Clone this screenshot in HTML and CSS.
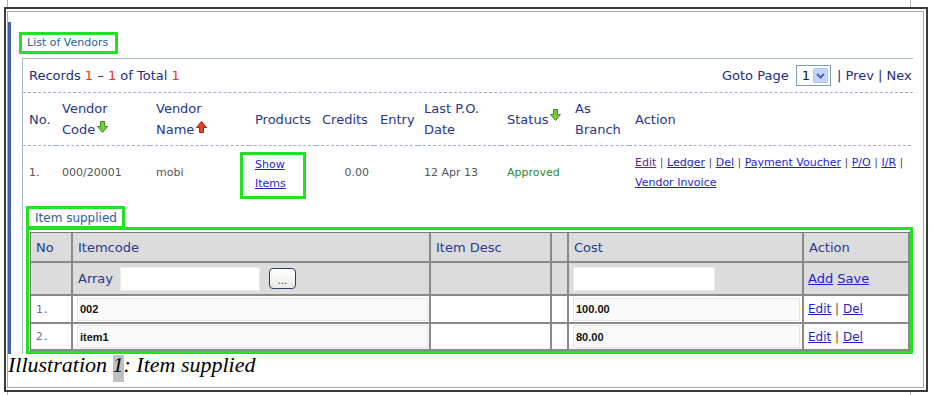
FILE: index.html
```html
<!DOCTYPE html>
<html lang="en">
<head>
    <meta charset="UTF-8">
    <meta name="viewport" content="width=device-width, initial-scale=1.0">
    <title>Illustration 1: Item supplied</title>
    <link rel="stylesheet" href="styles.css">
</head>
<body>
    <div class="sheet">
        <span class="mark mark-tl"></span>
        <span class="mark mark-tr"></span>
        <span class="mark mark-bl"></span>
        <span class="mark mark-br"></span>

        <div class="frame">
            <div class="inner">
                <div class="shot">
                    <div class="tag tag-vendors">List of Vendors</div>

                    <div class="panel">
                        <div class="records">
                            <div class="count">Records <b>1</b> &ndash; <b>1</b> of Total <b>1</b></div>
                            <div class="pager">Goto Page <span class="select"><span class="select-value">1</span><span class="select-btn"><svg width="13" height="13" viewBox="0 0 13 13"><path d="M3 5l3.5 3.5L10 5" fill="none" stroke="#4a64a0" stroke-width="2"/></svg></span></span> | Prev | Nex</div>
                        </div>

                        <table class="vendors">
                            <tr>
                                <th class="v-no">No.</th>
                                <th class="v-code">Vendor<br>Code<svg class="sort" width="11" height="12" viewBox="0 0 11 12"><path d="M3.5 .5h4v5h3l-5 6-5-6h3z" fill="#74cc3e" stroke="#3e901f"/></svg></th>
                                <th class="v-name">Vendor<br>Name<svg class="sort" width="11" height="12" viewBox="0 0 11 12"><path d="M5.5 .5l5 6h-3v5h-4v-5h-3z" fill="#e6402c" stroke="#a0261a"/></svg></th>
                                <th class="v-prod">Products</th>
                                <th class="v-cred">Credits</th>
                                <th class="v-entry">Entry</th>
                                <th class="v-date">Last P.O.<br>Date</th>
                                <th class="v-status">Status<svg class="sort sort-up" width="11" height="12" viewBox="0 0 11 12"><path d="M3.5 .5h4v5h3l-5 6-5-6h3z" fill="#74cc3e" stroke="#3e901f"/></svg></th>
                                <th class="v-branch">As<br>Branch</th>
                                <th class="v-action">Action</th>
                            </tr>
                            <tr>
                                <td>1.</td>
                                <td>000/20001</td>
                                <td>mobi</td>
                                <td class="products"><div class="show-box"><a href="#">Show</a><br><a href="#">Items</a></div></td>
                                <td class="num">0.00</td>
                                <td></td>
                                <td>12 Apr 13</td>
                                <td class="approved">Approved</td>
                                <td></td>
                                <td class="links"><a href="#" class="visited">Edit</a> | <a href="#">Ledger</a> | <a href="#">Del</a> | <a href="#">Payment Voucher</a> | <a href="#">P/O</a> | <a href="#">I/R</a> |<br><a href="#">Vendor Invoice</a></td>
                            </tr>
                        </table>

                        <div class="tag tag-items">Item supplied</div>

                        <div class="items-box">
                            <table class="items">
                                <tr class="items-head">
                                    <th class="c-no">No</th>
                                    <th class="c-code">Itemcode</th>
                                    <th class="c-desc">Item Desc</th>
                                    <th class="c-gap"></th>
                                    <th class="c-cost">Cost</th>
                                    <th class="c-act">Action</th>
                                </tr>
                                <tr class="items-filter">
                                    <td></td>
                                    <td>
                                        <div class="array">
                                            <span>Array</span>
                                            <input class="box box-array" type="text">
                                            <button class="pick" type="button">...</button>
                                        </div>
                                    </td>
                                    <td></td>
                                    <td></td>
                                    <td><input class="box box-cost" type="text"></td>
                                    <td class="act"><a href="#">Add</a> <a href="#">Save</a></td>
                                </tr>
                                <tr class="items-row row-1">
                                    <td class="idx">1.</td>
                                    <td><input class="field-box field-code" type="text" value="002" readonly></td>
                                    <td></td>
                                    <td></td>
                                    <td><input class="field-box field-cost" type="text" value="100.00" readonly></td>
                                    <td class="act small"><a href="#">Edit</a> | <a href="#">Del</a></td>
                                </tr>
                                <tr class="items-row row-2">
                                    <td class="idx">2.</td>
                                    <td><input class="field-box field-code" type="text" value="item1" readonly></td>
                                    <td></td>
                                    <td></td>
                                    <td><input class="field-box field-cost" type="text" value="80.00" readonly></td>
                                    <td class="act small"><a href="#">Edit</a> | <a href="#">Del</a></td>
                                </tr>
                            </table>
                        </div>
                    </div>
                </div>

                <p class="caption">Illustration <span class="field">1</span>: Item supplied</p>
            </div>
        </div>
    </div>
</body>
</html>
```

FILE: styles.css
```css
* {
    margin: 0;
    padding: 0;
    box-sizing: border-box;
}

body {
    background: #fff;
    font-family: "DejaVu Sans", Verdana, sans-serif;
}

a {
    color: #1f1fcf;
}

/* Page with crop marks */
.sheet {
    position: relative;
    width: 933px;
    height: 395px;
    padding: 7px 0 0 4px;
    overflow: hidden;
}

.mark {
    position: absolute;
    width: 1px;
    background: #b4b4b4;
}

.mark-tl { left: 7px; top: 0; height: 7px; }
.mark-tr { left: 910px; top: 0; height: 7px; }
.mark-bl { left: 7px; top: 392px; height: 3px; }
.mark-br { left: 910px; top: 392px; height: 3px; }

.frame {
    width: 924px;
    height: 385px;
    border: 2px solid #3a3a3a;
    padding: 2px 2px 2px 1px;
}

.inner {
    height: 100%;
    border: 1px solid #a8a8a8;
    padding-top: 10px;
}

/* Embedded screenshot */
.shot {
    width: 905px;
    height: 332px;
    border-left: 3px solid #4262a2;
    padding-top: 10px;
    display: flex;
    flex-direction: column;
    overflow: hidden;
}

.tag {
    align-self: flex-start;
    border: 3px solid #22e222;
    color: #2d5d96;
    white-space: nowrap;
}

.tag-vendors {
    margin-left: 8px;
    width: 99px;
    height: 22px;
    padding-left: 5px;
    font-size: 11px;
    line-height: 16px;
}

.panel {
    margin-left: 11px;
    margin-top: 4px;
    width: 891px;
    flex: 1;
    border-top: 1px solid #a6bad0;
    border-left: 1px solid #a6bad0;
}

.records {
    width: 890px;
    height: 34px;
    padding-left: 6px;
    display: flex;
    align-items: center;
    border-bottom: 1px dashed #9fb2c8;
    font-size: 13px;
    color: #1f2d7d;
    white-space: nowrap;
}

.count {
    flex: none;
    width: 693px;
}

.count b {
    font-weight: normal;
    color: #e4341e;
}

.pager {
    flex: none;
    display: flex;
    align-items: center;
    white-space: pre;
}

.select {
    display: inline-flex;
    align-items: center;
    width: 35px;
    height: 21px;
    margin: 0 2px 0 3px;
    border: 1px solid #7f9db9;
    background: #fff;
    color: #111;
}

.select-value {
    padding-left: 5px;
}

.select-btn {
    display: flex;
    align-items: center;
    justify-content: center;
    width: 15px;
    height: 15px;
    margin-left: auto;
    margin-right: 2px;
    background: #c3d5fc;
    border: 1px solid #b0c4ec;
    border-radius: 2px;
}

/* Vendor list */
.vendors {
    width: 888px;
    border-collapse: separate;
    border-spacing: 0;
    table-layout: fixed;
}

.vendors th {
    height: 53px;
    padding-left: 6px;
    border-bottom: 1px dashed #9fb2c8;
    font-size: 13px;
    line-height: 21px;
    font-weight: normal;
    color: #27378a;
    text-align: left;
    vertical-align: middle;
    white-space: nowrap;
}

.v-no { width: 33px; }
.v-code { width: 94px; }
.v-name { width: 99px; }
.v-prod { width: 67px; }
.v-cred { width: 58px; }
.v-entry { width: 44px; }
.v-date { width: 83px; }
.v-status { width: 68px; }
.v-branch { width: 60px; }
.v-action { width: 282px; }

.sort {
    margin-left: 2px;
    vertical-align: 1px;
}

.sort-up {
    vertical-align: 3px;
}

.vendors td {
    height: 54px;
    padding-left: 6px;
    font-size: 11px;
    line-height: 20px;
    color: #555;
    vertical-align: middle;
    white-space: nowrap;
}

.vendors td.num {
    text-align: right;
    padding-right: 5px;
}

.vendors td.approved {
    color: #2f8a2f;
}

.vendors td.products {
    vertical-align: bottom;
    padding-bottom: 1px;
}

.show-box {
    width: 66px;
    margin-left: -15px;
    padding: 0 0 3px 12px;
    border: 3px solid #22e222;
    line-height: 19px;
}

.links {
    color: #555;
}

.links a.visited {
    color: #5b2a80;
}

/* Item supplied */
.tag-items {
    margin-left: 3px;
    margin-top: 6px;
    width: 99px;
    height: 23px;
    padding-left: 6px;
    font-size: 12px;
    line-height: 18px;
}

.items-box {
    width: 887px;
    margin-top: -2px;
    margin-left: 3px;
    border: 3px solid #22e222;
    padding: 2px 0 0 1px;
}

.items {
    width: 880px;
    border-collapse: separate;
    border-spacing: 0;
    table-layout: fixed;
    border-top: 1px solid #7a7a7a;
    border-left: 1px solid #7a7a7a;
}

.items th,
.items td {
    border-right: 2px solid #8a8a8a;
    border-bottom: 2px solid #8a8a8a;
    padding-left: 5px;
    vertical-align: middle;
    text-align: left;
    white-space: nowrap;
}

.items th {
    height: 30px;
    background: #dcdcdc;
    font-size: 13px;
    font-weight: normal;
    color: #2a3a8e;
}

.c-no { width: 42px; }
.c-code { width: 358px; }
.c-desc { width: 121px; padding-left: 3px; }
.c-gap { width: 17px; }
.c-cost { width: 235px; }
.c-act { width: 106px; }

.items-filter td {
    height: 33px;
    background: #dcdcdc;
    font-size: 13px;
    color: #2a3a8e;
}

.array {
    display: flex;
    align-items: center;
}

.box {
    display: block;
    height: 24px;
    border: 1px solid #ececec;
    background: #fff;
    font: 12px "DejaVu Sans", sans-serif;
}

.box-array {
    width: 140px;
    margin-left: 7px;
}

.pick {
    width: 27px;
    height: 21px;
    margin-left: 9px;
    border: 1px solid #2a3f66;
    border-radius: 4px;
    background: linear-gradient(#ffffff, #ebeae4);
    font: 10px "DejaVu Sans", sans-serif;
    color: #444;
    padding-top: 3px;
}

.items-filter td:nth-child(5) {
    padding-left: 4px;
}

.box-cost {
    width: 142px;
}

.items-filter td.act {
    padding-left: 4px;
}

.items-row td {
    background: #fff;
    font-size: 12px;
}

.items-row.row-1 td { height: 28px; }
.items-row.row-2 td { height: 27px; }

.items-row td:nth-child(2),
.items-row td:nth-child(5) {
    padding-left: 4px;
}

.items td.idx {
    font-family: "DejaVu Sans Mono", monospace;
    font-size: 11px;
    color: #6c6c9c;
}

.field-box {
    display: block;
    height: 23px;
    padding-left: 2px;
    border: 1px solid #e6e6e6;
    background: #fafafa;
    font: bold 11px "Liberation Sans", Arial, sans-serif;
    color: #111;
}

.field-code { width: 351px; }
.field-cost { width: 227px; }

.items td.act {
    padding-left: 4px;
    color: #555;
}

.items td.small {
    font-size: 12px;
}

/* Caption */
.caption {
    font-family: "Liberation Serif", "Times New Roman", serif;
    font-style: italic;
    font-size: 22px;
    line-height: 22px;
    color: #000;
    white-space: nowrap;
}

.field {
    display: inline-block;
    line-height: 20px;
    padding-bottom: 7px;
    background: #c0c0c0;
}
```
